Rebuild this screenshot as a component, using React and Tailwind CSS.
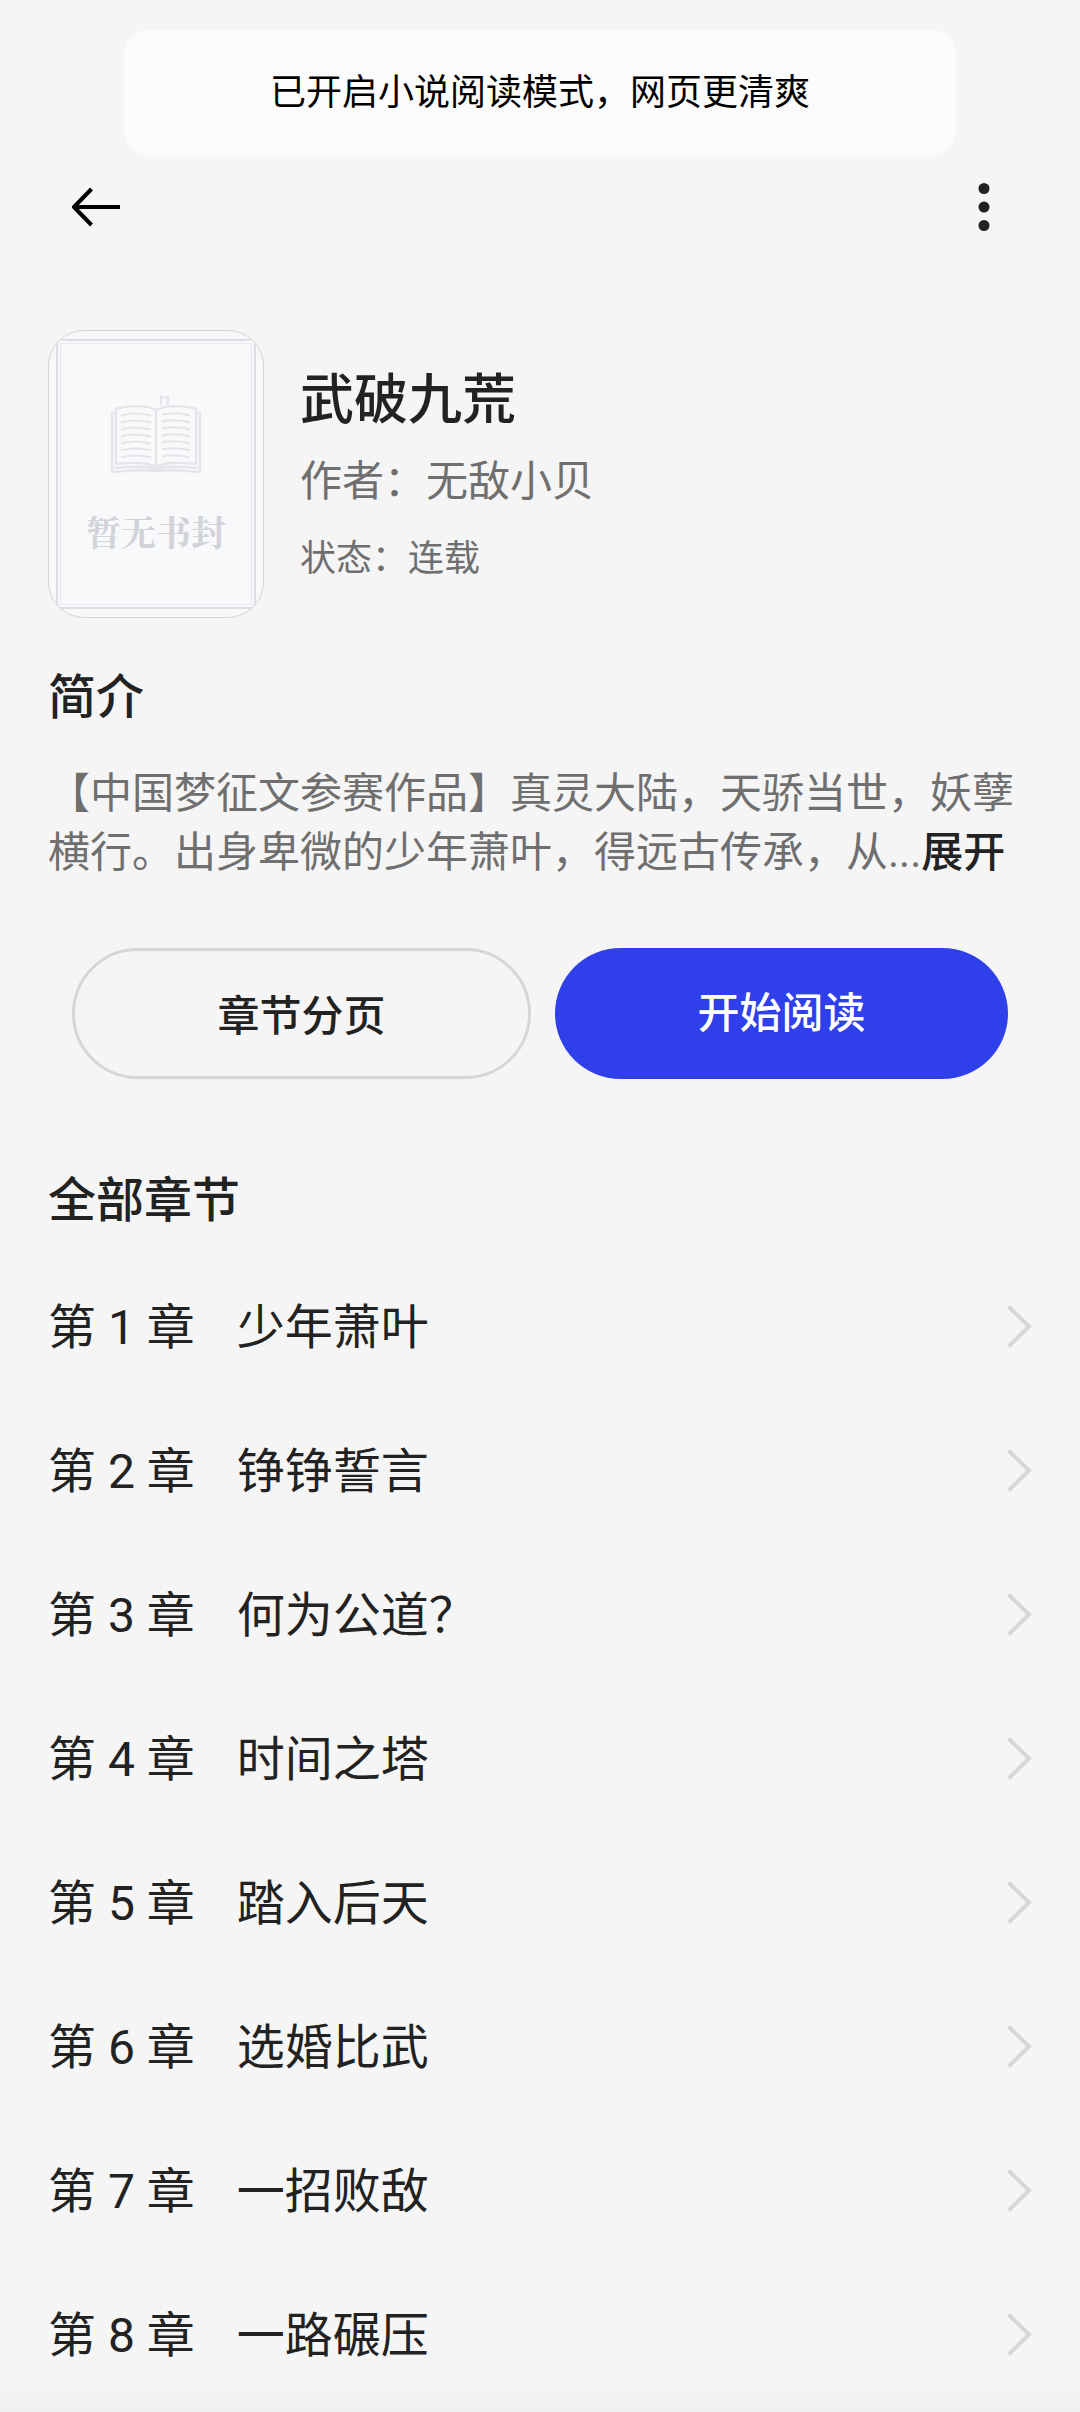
const chapters = [
  '少年萧叶',
  '铮铮誓言',
  '何为公道？',
  '时间之塔',
  '踏入后天',
  '选婚比武',
  '一招败敌',
  '一路碾压',
]

function BookIcon() {
  const rows = [0, 1, 2, 3, 4, 5, 6]
  return (
    <svg width="92" height="80" viewBox="0 0 92 80" fill="none" stroke="#e4e5e8" strokeWidth="2.4">
      <path d="M51 11V2l3 2h1l3-2v9" strokeWidth="2" />
      <path d="M6 19H2v59c15-1 32-3 44-1 12-2 29 0 44 1V19h-4" />
      <path d="M6 70V15c12-4 30-4 40 1 10-5 28-5 40-1v55" />
      <path d="M6 70c12-1 30-3 40 3 10-6 28-4 40-3" />
      <path d="M4 74c14-1 32-3 42 1 10-4 28-2 42-1M46 16v59" />
      {rows.map(i => (
        <path
          key={i}
          d={`M11 ${21.5 + i * 7}q13-4 30 0M52 ${20.5 + i * 7}q13-3 28 1`}
          strokeWidth="2"
        />
      ))}
    </svg>
  )
}

function Cover() {
  return (
    <div className="w-[216px] h-72 shrink-0 rounded-[36px] border border-[#d4d4d6] bg-[#f7f8f9] px-[7px] py-2 overflow-hidden">
      <div className="h-full border-2 border-[#dddee3] p-[2px]">
        <div className="h-full border border-[#e9eaee] bg-[#f8f9fb] flex flex-col items-center pt-[50px]">
          <BookIcon />
          <span className="mt-8 whitespace-nowrap text-[35px] leading-[50px] font-bold text-[#d2d3d8] font-['Noto_Serif_CJK_SC','Noto_Sans_CJK_SC',serif]">
            暂无书封
          </span>
        </div>
      </div>
    </div>
  )
}

function ChapterRow({ index, title }) {
  return (
    <li className="h-36 flex items-center justify-between text-5xl text-[#222]">
      <div className="flex gap-[42px] pt-px">
        <span>第 {index} 章</span>
        <span>{title}</span>
      </div>
      <svg width="25" height="44" viewBox="0 0 25 44" fill="none" stroke="#d7d7d7" strokeWidth="4">
        <path d="M1.5 1.500 22 21.500 1.500 41.500" />
      </svg>
    </li>
  )
}

export default function App() {
  return (
    <div className="relative w-[1080px] h-[2412px] overflow-hidden bg-[#f5f5f5] text-[#222] font-[Roboto,'Noto_Sans_CJK_SC',sans-serif]">
      {/* Toast */}
      <div className="absolute left-[124px] top-[30px] w-[832px] h-[126px] rounded-3xl bg-[#fbfbfb] flex items-center justify-center text-4xl text-black">
        已开启小说阅读模式，网页更清爽
      </div>

      {/* Top bar */}
      <header className="h-[330px] pt-[182px] px-[72px] flex items-start justify-between">
        <svg width="48" height="50" viewBox="0 0 48 50" fill="none" stroke="#000" strokeWidth="4">
          <path d="M48 25H2M19.500 7 2 25l17.500 18" strokeLinejoin="round" />
        </svg>
        <svg width="48" height="50" viewBox="0 0 48 50" fill="#222">
          <circle cx="24" cy="6.500" r="5.500" />
          <circle cx="24" cy="25" r="5.500" />
          <circle cx="24" cy="43.500" r="5.500" />
        </svg>
      </header>

      {/* Book info */}
      <section className="px-12 flex gap-9">
        <Cover />
        <div className="pt-[31px]">
          <h1 className="text-[54px] leading-[80px] font-medium">武破九荒</h1>
          <p className="mt-[10px] text-[42px] leading-[62px] text-[#6f6f6f]">作者：无敌小贝</p>
          <p className="mt-[19px] text-4xl leading-[54px] text-[#6f6f6f]">状态：连载</p>
        </div>
      </section>

      {/* Intro */}
      <section className="px-12 pt-11">
        <h2 className="text-5xl leading-[72px] font-medium">简介</h2>
        <p className="mt-[30px] text-[42px] leading-[59px] text-[#6f6f6f] whitespace-nowrap">
          【中国梦征文参赛作品】真灵大陆，天骄当世，妖孽
          <br />
          横行。出身卑微的少年萧叶，得远古传承，从...
          <span className="font-medium text-[#222]">展开</span>
        </p>
      </section>

      {/* Actions */}
      <div className="mt-[66px] px-[72px] flex gap-6 text-[42px] font-medium">
        <button className="w-[459px] h-[131px] rounded-full border-3 border-[#d6d6d6] pt-[6px]">章节分页</button>
        <button className="w-[453px] h-[131px] rounded-full bg-[#2f3fea] text-white">开始阅读</button>
      </div>

      {/* Chapters */}
      <section className="px-12 pt-[86px]">
        <h2 className="text-5xl leading-[72px] font-medium">全部章节</h2>
        <ul className="mt-[18px]">
          {chapters.map((title, i) => (
            <ChapterRow key={title} index={i + 1} title={title} />
          ))}
        </ul>
      </section>

      <div className="absolute inset-x-0 bottom-0 h-8 bg-gradient-to-b from-[#f5f5f5] to-[#f0f0f0]" />
    </div>
  )
}
